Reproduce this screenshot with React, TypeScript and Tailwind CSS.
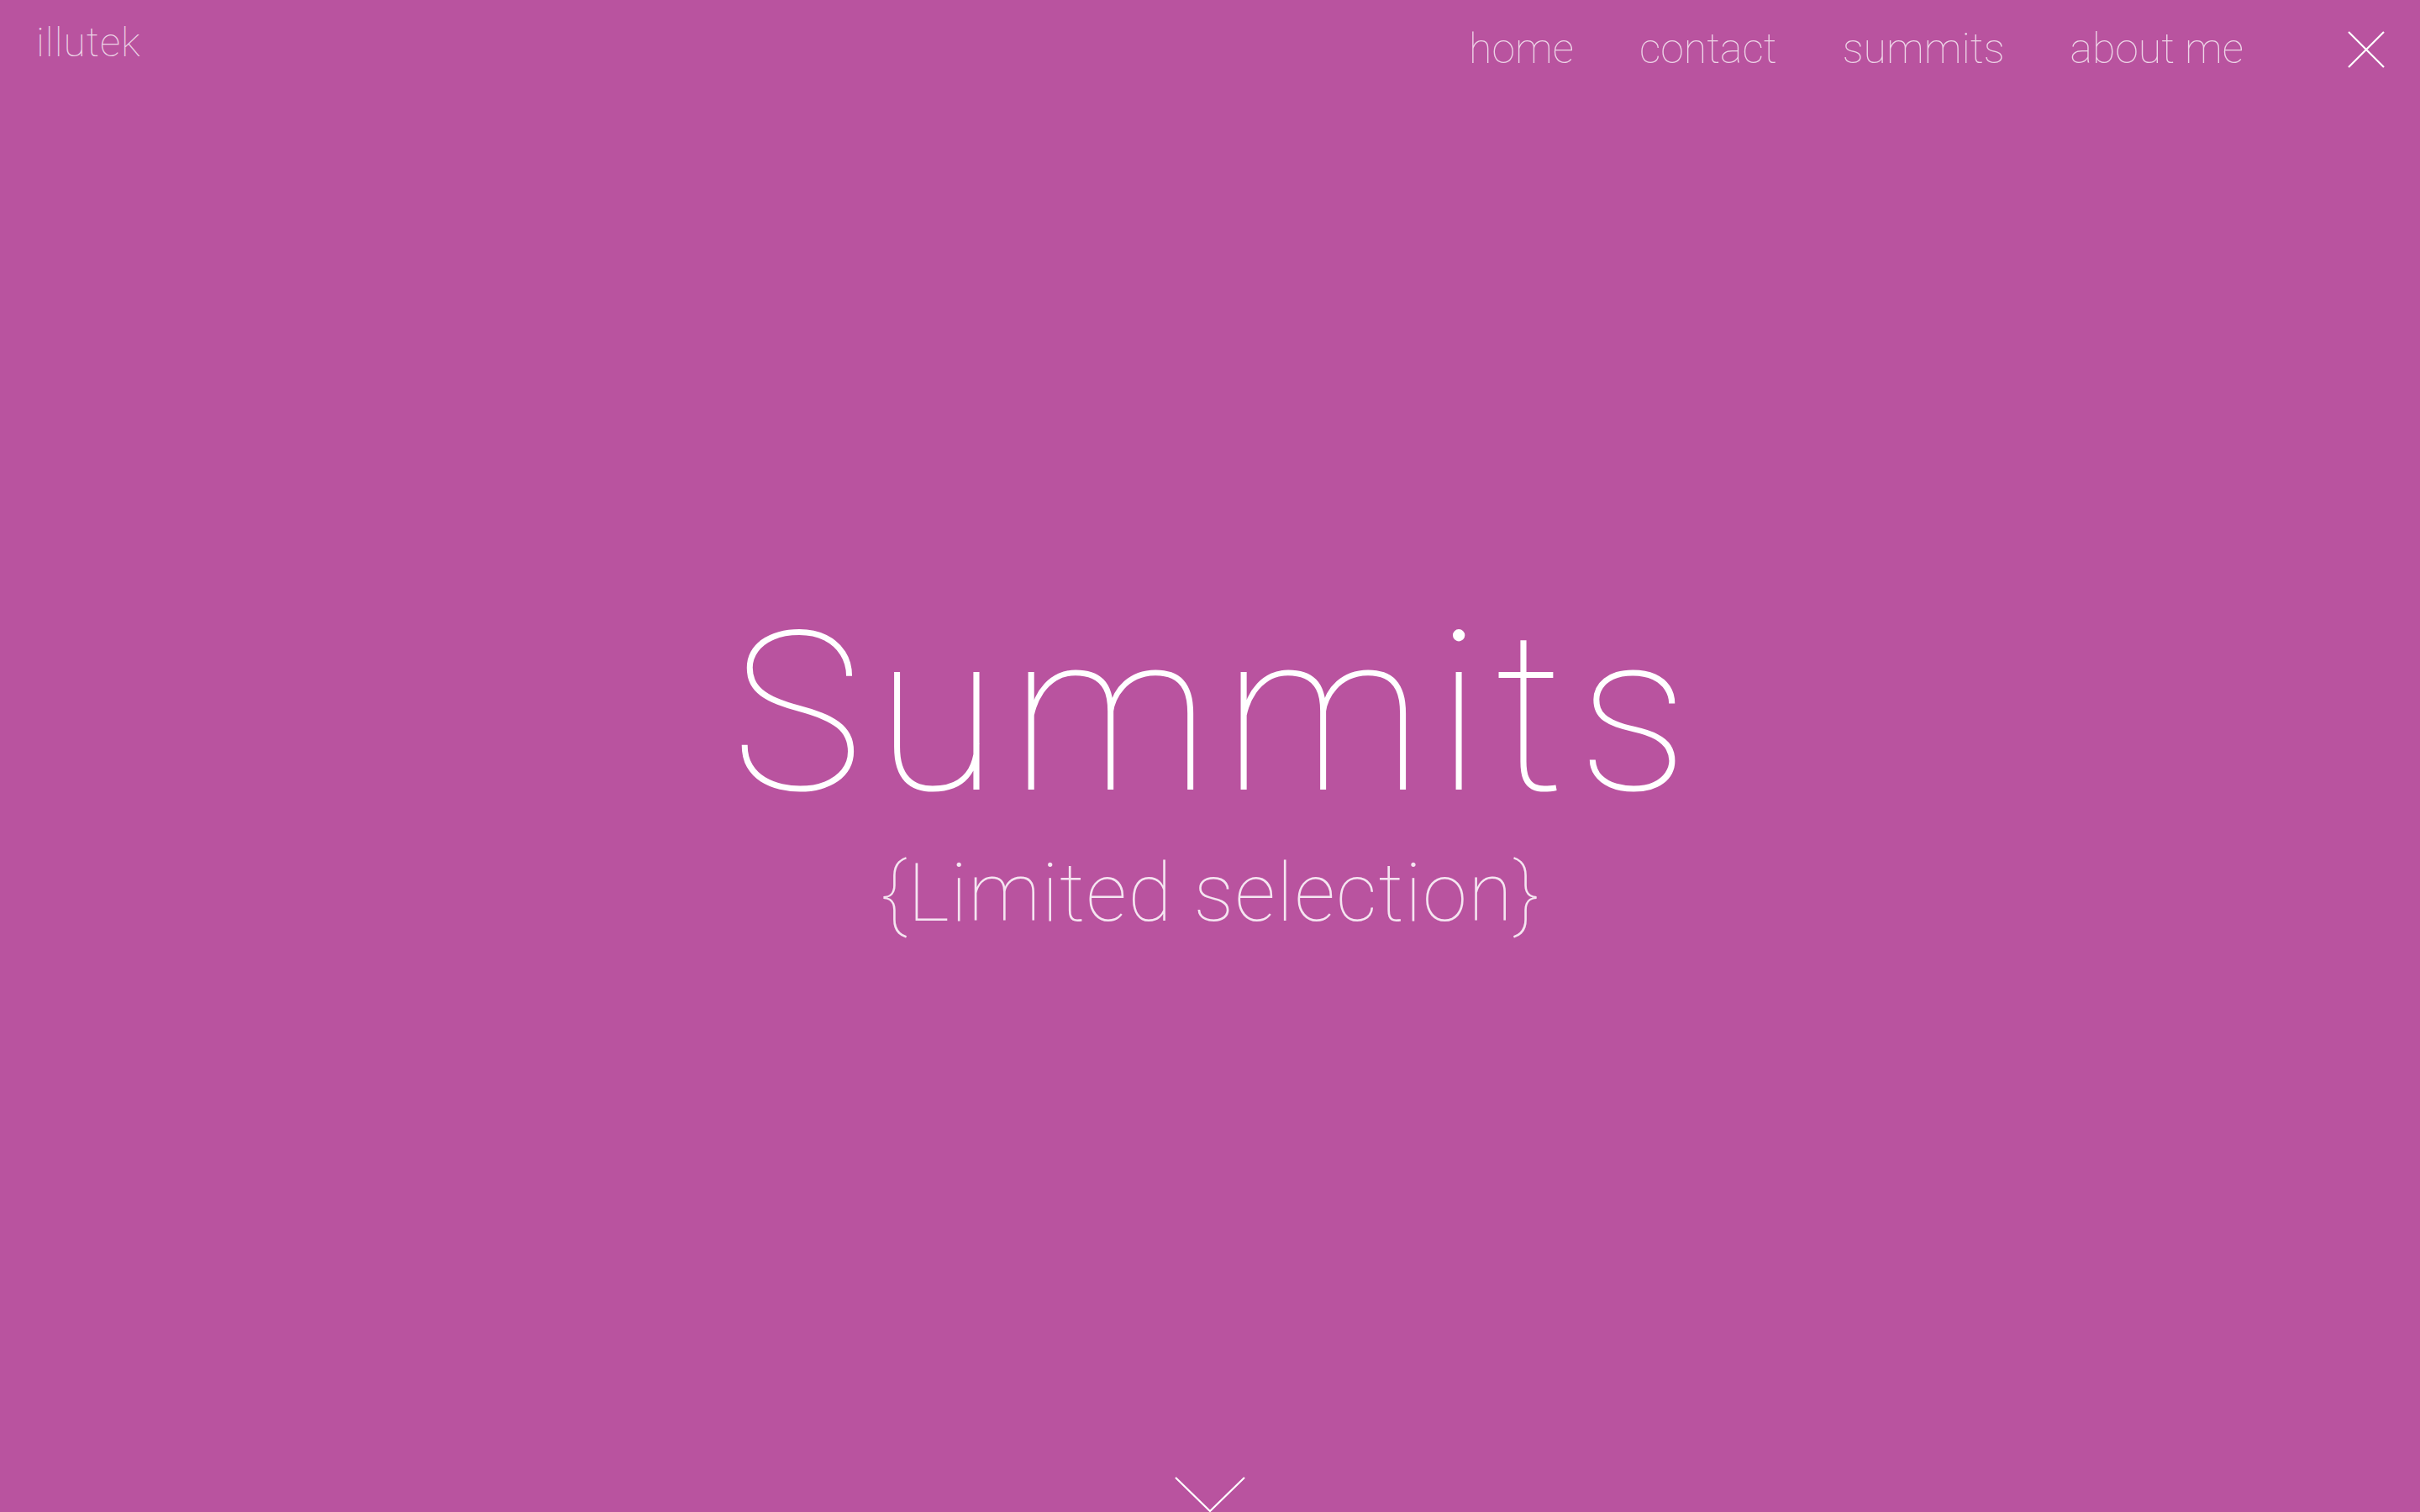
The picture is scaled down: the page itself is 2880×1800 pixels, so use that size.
const navItems = ['home', 'contact', 'summits', 'about me']

export default function App() {
  return (
    <div
      className="relative flex h-screen w-full flex-col overflow-hidden bg-[#b9539f] text-white"
      style={{ fontFamily: 'Roboto, "Liberation Sans", sans-serif' }}
    >
      {/* Header */}
      <header className="flex h-[116px] shrink-0 items-start justify-between pl-[43px] pr-[42px]">
        <a className="pt-[27px] text-[48px] font-thin leading-none tracking-[0.02em] text-white/75">illutek</a>
        <div className="flex items-start">
          <nav className="flex gap-[78px] pt-[33px]">
            {navItems.map(item => (
              <a key={item} className="text-[50px] font-thin leading-none text-white/75">
                {item}
              </a>
            ))}
          </nav>
          <button className="ml-[124px] mt-[37px] h-[44px] w-[44px]">
            <svg viewBox="0 0 44 44" className="h-full w-full" fill="none" stroke="white" strokeWidth="2.2">
              <path d="M1 1L43 43M43 1L1 43" />
            </svg>
          </button>
        </div>
      </header>

      {/* Hero */}
      <main className="flex flex-1 flex-col items-center pt-[601px]">
        <h1 className="pl-[0.058em] text-[265px] font-thin leading-none tracking-[0.058em] text-white">Summits</h1>
        <p className="mt-[33px] pl-[0.014em] text-[96px] font-thin leading-none tracking-[0.014em] text-white/85">
          {'{Limited selection}'}
        </p>
      </main>

      {/* Scroll hint */}
      <div className="absolute bottom-0 left-1/2 -translate-x-1/2">
        <svg width="84" height="42" viewBox="0 0 84 42" fill="none" stroke="white" strokeWidth="2.2">
          <path d="M1 1L42 41L83 1" />
        </svg>
      </div>
    </div>
  )
}
